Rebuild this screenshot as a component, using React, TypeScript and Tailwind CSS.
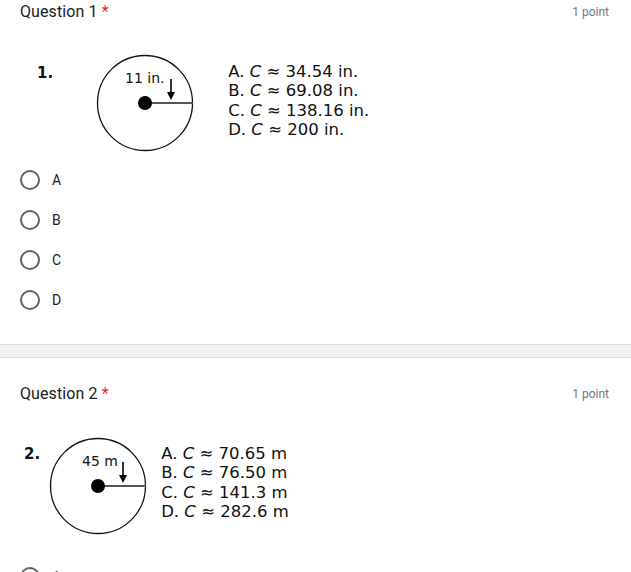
import React from "react";

function Diagram({ label, labelX, arrowX, fs }: { label: string; labelX: number; arrowX: number; fs: number }) {
  return (
    <svg width="100" height="100" viewBox="0 0 100 100" className="block shrink-0">
      <circle cx="49" cy="49" r="47.5" fill="none" stroke="#111" strokeWidth="1.3" />
      <line x1="49" y1="49" x2="97" y2="49" stroke="#555" strokeWidth="2.2" />
      <circle cx="49" cy="49" r="7" fill="#000" />
      <line x1={arrowX} y1="25" x2={arrowX} y2="40" stroke="#000" strokeWidth="1.6" />
      <path d={`M ${arrowX - 4} 38 L ${arrowX + 4} 38 L ${arrowX} 46 Z`} fill="#000" />
      <text x={labelX} y="29" fontFamily="'DejaVu Sans', sans-serif" fontSize={fs} fill="#111">
        {label}
      </text>
    </svg>
  );
}

function Options({ items }: { items: [string, string][] }) {
  return (
    <div className="text-[16.5px] leading-[19.3px] text-[#111]" style={{ fontFamily: "'DejaVu Sans', sans-serif" }}>
      {items.map(([l, v]) => (
        <div key={l} className="whitespace-pre">
          {l}. <span className="italic">C</span> ≈ {v}
        </div>
      ))}
    </div>
  );
}

function Radio({ label }: { label: string }) {
  return (
    <div className="flex items-center h-10">
      <div className="w-5 h-5 rounded-full border-2 border-[#5f6368] shrink-0" />
      <span className="ml-3 text-[14px] text-[#202124]">{label}</span>
    </div>
  );
}

function Header({ n }: { n: number }) {
  return (
    <div className="flex items-center justify-between h-6">
      <div className="text-[16px] text-[#202124] tracking-[0.1px]">
        Question {n}
        <span className="text-[#d93025] ml-1">*</span>
      </div>
      <div className="text-[12px] text-[#70757a] mr-[1px]">1 point</div>
    </div>
  );
}

export default function App() {
  return (
    <div className="w-[631px] h-[572px] overflow-hidden bg-[#f1f1f1]" style={{ fontFamily: "Roboto, Arial, sans-serif" }}>
      <div className="-mt-[24px]">
        <div className="bg-white border-b border-[#dadce0] pt-6 pb-6 pl-5 pr-[21px]">
          <Header n={1} />
          <div className="flex items-start mt-[30px] h-[100px]">
            <div
              className="ml-[17px] mt-[10px] text-[15px] font-bold text-[#111] leading-[19px]"
              style={{ fontFamily: "'DejaVu Sans', sans-serif" }}
            >
              1.
            </div>
            <div className="ml-[43px]">
              <Diagram label="11 in." labelX={29} arrowX={75} fs={14} />
            </div>
            <div className="ml-[32px] mt-[8px]">
              <Options
                items={[
                  ["A", "34.54 in."],
                  ["B", "69.08 in."],
                  ["C", "138.16 in."],
                  ["D", "200 in."],
                ]}
              />
            </div>
          </div>
          <div className="mt-[6px]">
            <Radio label="A" />
            <Radio label="B" />
            <Radio label="C" />
            <Radio label="D" />
          </div>
        </div>
        <div className="h-3" />
        <div className="bg-white border-t border-[#dadce0] pt-6 pb-6 pl-5 pr-[21px]">
          <Header n={2} />
          <div className="flex items-start mt-[31px] h-[100px]">
            <div
              className="ml-[4px] mt-[8px] text-[15px] font-bold text-[#111] leading-[19px]"
              style={{ fontFamily: "'DejaVu Sans', sans-serif" }}
            >
              2.
            </div>
            <div className="ml-[9px]">
              <Diagram label="45 m" labelX={33} arrowX={74} fs={14} />
            </div>
            <div className="ml-[12px] mt-[7px]">
              <Options
                items={[
                  ["A", "70.65 m"],
                  ["B", "76.50 m"],
                  ["C", "141.3 m"],
                  ["D", "282.6 m"],
                ]}
              />
            </div>
          </div>
          <div className="mt-[20px]">
            <Radio label="A" />
            <Radio label="B" />
          </div>
        </div>
      </div>
    </div>
  );
}
